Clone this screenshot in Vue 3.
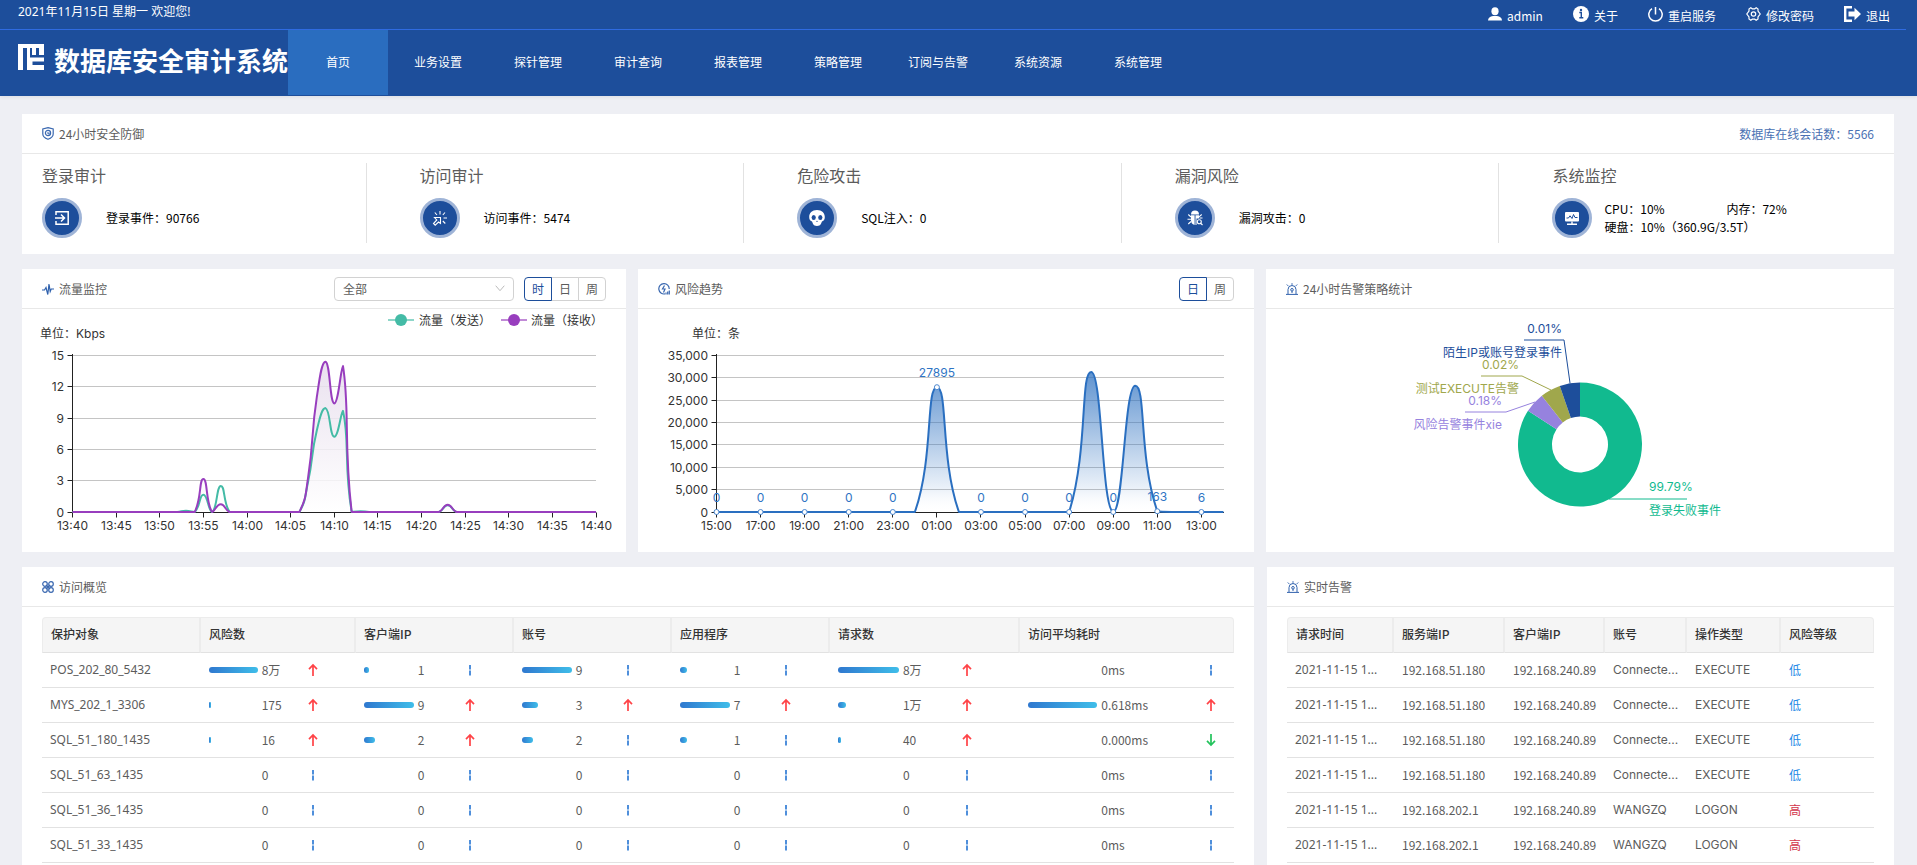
<script setup>
import { ref } from 'vue'

const tools = [
  { icon: 'user', label: 'admin' },
  { icon: 'info', label: '关于' },
  { icon: 'power', label: '重启服务' },
  { icon: 'gear', label: '修改密码' },
  { icon: 'exit', label: '退出' },
]
const menu = ['首页', '业务设置', '探针管理', '审计查询', '报表管理', '策略管理', '订阅与告警', '系统资源', '系统管理']
const stats = [
  { icon: 'login', title: '登录审计', text: '登录事件：90766' },
  { icon: 'click', title: '访问审计', text: '访问事件：5474' },
  { icon: 'skull', title: '危险攻击', text: 'SQL注入：0' },
  { icon: 'bug', title: '漏洞风险', text: '漏洞攻击：0' },
  { icon: 'monitor', title: '系统监控' },
]

const trafficRange = ref('时')
const riskRange = ref('日')
const target = ref('全部')

/* Smooth path through the points, control points kept inside each segment's box */
function smoothPath(pts, smooth = 0.5) {
  const clamp = (v, a, b) => Math.max(Math.min(v, Math.max(a, b)), Math.min(a, b))
  let d = `M${pts[0][0]},${pts[0][1]}`
  let c0 = pts[0]
  for (let i = 1; i < pts.length; i++) {
    const prev = pts[i - 1]
    const cur = pts[i]
    const next = pts[i + 1]
    let c1 = cur
    let n0 = cur
    if (next) {
      const lp = Math.hypot(cur[0] - prev[0], cur[1] - prev[1])
      const ln = Math.hypot(next[0] - cur[0], next[1] - cur[1])
      const r = ln / (ln + lp)
      c1 = [0, 1].map(a => clamp(cur[a] - (next[a] - prev[a]) * smooth * (1 - r), prev[a], cur[a]))
      n0 = [0, 1].map(a => clamp(cur[a] + (next[a] - prev[a]) * smooth * r, next[a], cur[a]))
    }
    d += `C${c0},${c1},${cur}`
    c0 = n0
  }
  return d
}
const series = (length, values) => Array.from({ length }, (_, i) => values[i] ?? 0)

const tX = i => 50.5 + i * 8.725
const tY = v => 203 - v * 10.44
const trafficTicks = ['13:40', '13:45', '13:50', '13:55', '14:00', '14:05', '14:10', '14:15', '14:20', '14:25', '14:30', '14:35', '14:40']
  .map((label, i) => ({ label, x: Math.floor(tX(i * 5)) + 0.5 }))
const trafficLevels = [15, 12, 9, 6, 3, 0].map(v => ({ v, y: Math.floor(tY(v)) + 0.5 }))
const sent = smoothPath(series(61, { 13: 0.12, 15: 1.65, 17: 2.5, 27: 2.9, 28: 7.8, 29: 9.95, 30: 7.2, 31: 9.7, 33: 0.08, 43: 0.65 }).map((v, i) => [tX(i), tY(v)]))
const received = smoothPath(series(61, { 15: 3.15, 17: 0.75, 27: 3.3, 28: 11, 29: 14.4, 30: 10.4, 31: 14, 43: 0.7 }).map((v, i) => [tX(i), tY(v)]))
const receivedArea = received + 'V203H50.5Z'

const rX = i => 78.5 + i * 22.04
const rY = v => 203 - v * 0.004474
const riskValues = series(24, { 10: 27895, 17: 31300, 19: 28200, 20: 163, 22: 6 })
const risk = smoothPath(riskValues.map((v, i) => [rX(i), rY(v)]))
const riskArea = risk + 'V203H78.5Z'
const riskLevels = [35000, 30000, 25000, 20000, 15000, 10000, 5000, 0]
  .map(v => ({ label: v.toLocaleString('en-US'), y: Math.floor(rY(v)) + 0.5 }))
const riskPoints = riskValues
  .map((v, i) => ({ v, i, x: rX(i), y: rY(v), label: String((15 + i) % 24).padStart(2, '0') + ':00' }))
  .filter(p => p.i % 2 === 0)

function ring(from, to) {
  const p = (deg, r) => {
    const a = (deg * Math.PI) / 180
    return `${(314 + r * Math.sin(a)).toFixed(2)},${(135.5 - r * Math.cos(a)).toFixed(2)}`
  }
  const big = to - from > 180 ? 1 : 0
  return `M${p(from, 62)}A62,62 0 ${big} 1 ${p(to, 62)}L${p(to, 28)}A28,28 0 ${big} 0 ${p(from, 28)}Z`
}
const slices = [
  { name: '登录失败事件', pct: '99.79%', color: '#11ba8f', d: ring(0, 303), line: '343,190 380,190 421,190', x: 383, y: 190, anchor: 'start' },
  { name: '风险告警事件xie', pct: '0.18%', color: '#9682de', d: ring(303, 322), line: '269,93 240,103 199,103', x: 236, y: 104, anchor: 'end' },
  { name: '测试EXECUTE告警', pct: '0.02%', color: '#a0a74c', d: ring(322, 341), line: '285,81 256,67 215,67', x: 253, y: 68, anchor: 'end' },
  { name: '陌生IP或账号登录事件', pct: '0.01%', color: '#1d4e9b', d: ring(341, 360), line: '304,74 298,31 258,31', x: 296, y: 32, anchor: 'end' },
]

const overviewHead = ['保护对象', '风险数', '客户端IP', '账号', '应用程序', '请求数', '访问平均耗时']
const idle = [['0', 0, '-'], ['0', 0, '-'], ['0', 0, '-'], ['0', 0, '-'], ['0', 0, '-'], ['0ms', 0, '-']]
const overview = [
  { name: 'POS_202_80_5432', cells: [['8万', 100, 'up'], ['1', 11, '-'], ['9', 100, '-'], ['1', 14, '-'], ['8万', 100, 'up'], ['0ms', 0, '-']] },
  { name: 'MYS_202_1_3306', cells: [['175', 4, 'up'], ['9', 100, 'up'], ['3', 33, 'up'], ['7', 100, 'up'], ['1万', 13, 'up'], ['0.618ms', 100, 'up']] },
  { name: 'SQL_51_180_1435', cells: [['16', 4, 'up'], ['2', 22, 'up'], ['2', 22, '-'], ['1', 14, '-'], ['40', 5, 'up'], ['0.000ms', 0, 'down']] },
  { name: 'SQL_51_63_1435', cells: idle },
  { name: 'SQL_51_36_1435', cells: idle },
  { name: 'SQL_51_33_1435', cells: idle },
]

const alertHead = ['请求时间', '服务端IP', '客户端IP', '账号', '操作类型', '风险等级']
const low = ['2021-11-15 1...', '192.168.51.180', '192.168.240.89', 'Connecte...', 'EXECUTE', '低']
const high = ['2021-11-15 1...', '192.168.202.1', '192.168.240.89', 'WANGZQ', 'LOGON', '高']
const alerts = [low, low, low, low, high, high]
</script>

<template>
  <div class="page">
    <header class="header">
      <div class="topbar">
        <span class="date">2021年11月15日 星期一 欢迎您!</span>
        <div class="tools">
          <a v-for="t in tools" :key="t.icon" href="#" class="tool">
            <svg v-if="t.icon === 'user'" width="14" height="14" viewBox="0 0 14 14" fill="currentColor">
              <ellipse cx="7" cy="4.2" rx="3.6" ry="4" /><path d="M0 13.4c0-2.6 2-3.800 5-4.400h4c3 .6 5 1.800 5 4.400z" />
            </svg>
            <svg v-else-if="t.icon === 'info'" width="16" height="16" viewBox="0 0 16 16">
              <circle cx="8" cy="8" r="8" fill="currentColor" />
              <path d="M6.300 6.500h2v5M6.300 11.800h4" stroke="#1d4e9b" stroke-width="1.400" fill="none" /><circle cx="8" cy="4" r="1.200" fill="#1d4e9b" />
            </svg>
            <svg v-else-if="t.icon === 'power'" width="15" height="15" viewBox="0 0 15 15" fill="none" stroke="currentColor" stroke-width="1.500">
              <path d="M7.500 0v7.500M4 1.600a6.700 6.700 0 1 0 7 0" />
            </svg>
            <svg v-else-if="t.icon === 'gear'" width="15" height="14" viewBox="0 0 15 14" fill="none" stroke="currentColor" stroke-width="1.200">
              <path d="M4.800.8 6.300 1.800h2.400L10.200.8 12 2v2l2.200 3L12 10v2l-1.800 1.200-1.500-1H6.300l-1.500 1L3 12v-2L.8 7 3 4V2z" /><circle cx="7.500" cy="7" r="2.200" />
            </svg>
            <svg v-else width="17" height="16" viewBox="0 0 17 16">
              <path d="M8 1.200H1.200v13.600H8" stroke="currentColor" stroke-width="2.400" fill="none" /><path d="M4.500 5.500h6V1.800L17 8l-6.500 6.200v-3.700h-6z" fill="currentColor" />
            </svg>
            <span>{{ t.label }}</span>
          </a>
        </div>
      </div>
      <div class="bar">
        <div class="brand">
          <svg width="26" height="26" viewBox="0 0 26 26">
            <path fill="#fff" d="M0 0h26v26H0z" />
            <path fill="#1d4e9b" d="M5 4h4v22H5zM12 4h2v7h4V4h3v7h5v2.500H12zM14.500 17.500H26V21H14.500z" />
          </svg>
          <h1>数据库安全审计系统</h1>
        </div>
        <nav>
          <a v-for="(m, i) in menu" :key="m" href="#" :class="{ active: i === 0 }">{{ m }}</a>
        </nav>
      </div>
    </header>

    <main>
      <section class="card">
        <div class="head">
          <svg width="12" height="13" viewBox="0 0 12 13" fill="none" stroke="#3a68b0" stroke-width="1.200">
            <path d="M6 .7 11.200 2v5c0 2.800-2.600 4.300-5.200 5.300C3.400 11.300.8 9.800.8 7V2z" /><circle cx="6" cy="6" r="2.600" /><path d="M5 6h2v1.500" />
          </svg>
          <h2>24小时安全防御</h2>
          <span class="online">数据库在线会话数：5566</span>
        </div>
        <div class="stats">
          <div v-for="s in stats" :key="s.title" class="stat">
            <h3>{{ s.title }}</h3>
            <div class="stat-row" :class="{ dense: !s.text }">
              <span class="disc">
                <svg v-if="s.icon === 'login'" width="16" height="16" viewBox="0 0 16 16" fill="none" stroke="#fff" stroke-width="1.500">
                  <path d="M2 5V1.800h12.200v12.400H2V11M1 8h9M7 4.500 10.500 8 7 11.500" />
                </svg>
                <svg v-else-if="s.icon === 'click'" width="16" height="16" viewBox="0 0 16 16" fill="none" stroke="#fff" stroke-width="1.100">
                  <path d="M2.500 7.500h6v6L6.500 12 3.200 15.200 1.500 13.500 4.800 10zM8 1v3.500M2.800 2.500 5 5M13 2.500 10.800 5M11.500 8H15M10.800 11l2.500 2.500" />
                </svg>
                <svg v-else-if="s.icon === 'skull'" width="16" height="16" viewBox="0 0 16 16">
                  <path fill="#fff" d="M8 0c5 0 7.800 3 7.800 7 0 2.200-.6 3.600-2.800 4.500-.8 1.500-1 4.500-5 4.500s-4.200-3-5-4.500C.8 10.600.2 9.200.2 7 .2 3 3 0 8 0z" />
                  <ellipse cx="4.700" cy="7.500" rx="2.100" ry="2.500" fill="#1d4e9b" /><ellipse cx="11.300" cy="7.500" rx="2.100" ry="2.500" fill="#1d4e9b" /><path d="m8 10.500.8 1.500H7.200z" fill="#1d4e9b" />
                </svg>
                <svg v-else-if="s.icon === 'bug'" width="16" height="16" viewBox="0 0 16 16">
                  <path fill="#fff" d="M4 4.500a4 4 0 0 1 8 0zM4 5.300h3.600V15C5 14.500 4 12.500 4 10zM8.500 5.300H12v3.200H9.500V15h-1z" />
                  <path fill="none" stroke="#fff" stroke-width="1.100" d="M4 7 1.300 4.500M4 9.300H.5M4 11.500 1.300 14M12 6.800l2.700-2.300M12.500 8h3M14 13.500l1.500 1.500" /><circle cx="12.300" cy="11.800" r="2" fill="none" stroke="#fff" stroke-width="1.100" />
                </svg>
                <svg v-else width="16" height="16" viewBox="0 0 16 16">
                  <rect x="1" y="2" width="14" height="9.500" rx="1" fill="#fff" /><path d="M8 11.500V14M3 14.300h10" stroke="#fff" stroke-width="1.400" />
                  <path d="M2.500 8h2L6 5.800 8 8.500l1.500-4L11 7.500h2.500" fill="none" stroke="#1d4e9b" />
                </svg>
              </span>
              <span v-if="s.text">{{ s.text }}</span>
              <div v-else class="usage">
                <span>CPU：10%</span><span>内存：72%</span>
                <span class="disk">硬盘：10%（360.9G/3.5T）</span>
              </div>
            </div>
          </div>
        </div>
      </section>

      <div class="charts">
        <section class="card">
          <div class="head">
            <svg width="12" height="12" viewBox="0 0 12 12" fill="none" stroke="#2f61ad" stroke-width="1.200"><path d="M0 7h2.500L4 4.500l1.800 7L7 1l1.200 7.500L9.200 6H12" /></svg>
            <h2>流量监控</h2>
            <div class="controls">
              <span class="picker">
                <select v-model="target" aria-label="监控对象"><option>全部</option></select>
                <svg width="10" height="7" viewBox="0 0 10 7" fill="none" stroke="#bbb"><path d="m.7.7 4.300 5L9.300.7" /></svg>
              </span>
              <div class="range" role="group" aria-label="时间范围">
                <button v-for="r in ['时', '日', '周']" :key="r" type="button" :class="{ on: trafficRange === r }" @click="trafficRange = r">{{ r }}</button>
              </div>
            </div>
          </div>
          <svg class="chart" viewBox="0 0 604 243" role="img" aria-label="流量监控">
            <defs>
              <linearGradient id="fadeTraffic" x1="0" y1="0" x2="0" y2="1"><stop offset="0" stop-color="#e6dcec" /><stop offset="1" stop-color="#fff" /></linearGradient>
            </defs>
            <path v-for="l in trafficLevels.slice(0, 5)" :key="l.v" :d="`M50.500 ${l.y}H574`" class="grid" />
            <path :d="receivedArea" fill="url(#fadeTraffic)" opacity=".85" />
            <path d="M50.500 45V204M50 203.500H574" class="axis" />
            <g v-for="l in trafficLevels" :key="'l' + l.v">
              <path :d="`M45.500 ${l.y}h5`" class="axis" /><text x="42" :y="l.y + 4" text-anchor="end">{{ l.v }}</text>
            </g>
            <g v-for="t in trafficTicks" :key="t.label">
              <path :d="`M${t.x} 203.500v5`" class="axis" /><text :x="t.x" y="221" text-anchor="middle">{{ t.label }}</text>
            </g>
            <path :d="sent" class="line" stroke="#44bba6" />
            <path :d="received" class="line" stroke="#983ebe" />
            <path d="M366 11h26" stroke="#44bba6" stroke-width="2" opacity=".6" /><circle cx="379" cy="11" r="6" fill="#44bba6" />
            <text x="397" y="16">流量（发送）</text>
            <path d="M479 11h26" stroke="#983ebe" stroke-width="2" opacity=".6" /><circle cx="492" cy="11" r="6" fill="#983ebe" />
            <text x="509" y="16">流量（接收）</text>
            <text x="18" y="29">单位：Kbps</text>
          </svg>
        </section>

        <section class="card">
          <div class="head">
            <svg width="12" height="12" viewBox="0 0 12 12" fill="none" stroke="#3a68b0" stroke-width="1.200">
              <path d="M7 10.900A5.200 5.200 0 1 1 11.200 6M6.500 2.500 4.500 6H7L5.500 9.500" /><path d="M8 11.500V9.500M9.700 11.500v-3M11.300 11.500V7.500" />
            </svg>
            <h2>风险趋势</h2>
            <div class="controls">
              <div class="range" role="group" aria-label="时间范围">
                <button v-for="r in ['日', '周']" :key="r" type="button" :class="{ on: riskRange === r }" @click="riskRange = r">{{ r }}</button>
              </div>
            </div>
          </div>
          <svg class="chart" viewBox="0 0 616 243" role="img" aria-label="风险趋势">
            <defs>
              <linearGradient id="fadeRisk" x1="0" y1="0" x2="0" y2="1"><stop offset="0" stop-color="#2a6fc0" stop-opacity=".75" /><stop offset=".85" stop-color="#2a6fc0" stop-opacity=".08" /><stop offset="1" stop-color="#fff" stop-opacity="0" /></linearGradient>
            </defs>
            <path v-for="l in riskLevels.slice(0, 7)" :key="l.y" :d="`M78.500 ${l.y}H586`" class="grid" />
            <path d="M78.500 45V204M78 203.500H586" class="axis" />
            <path :d="riskArea" fill="url(#fadeRisk)" />
            <g v-for="l in riskLevels" :key="l.label">
              <path :d="`M73.500 ${l.y}h5`" class="axis" /><text x="70" :y="l.y + 4" text-anchor="end">{{ l.label }}</text>
            </g>
            <g v-for="p in riskPoints" :key="p.i">
              <path :d="`M${Math.floor(p.x) + 0.5} 203.500v5`" class="axis" /><text :x="p.x" y="221" text-anchor="middle">{{ p.label }}</text>
            </g>
            <path :d="risk" class="line" stroke="#2a6fc0" />
            <g v-for="p in riskPoints" :key="'p' + p.i">
              <circle :cx="p.x" :cy="p.y" r="2.500" fill="#fff" stroke="#4a86cf" />
              <text :x="p.x" :y="p.y - 10" text-anchor="middle" class="value">{{ p.v }}</text>
            </g>
            <text x="54" y="29">单位：条</text>
          </svg>
        </section>

        <section class="card">
          <div class="head">
            <svg width="12" height="12" viewBox="0 0 12 12" fill="none" stroke="#2f61ad"><path d="M0 11.400h12M2 11V6.500a4 4 0 0 1 8 0V11M6 .2v1.600M.8 1.500l1.400 1.400M11.200 1.500 9.800 2.900M6 8v2" /><circle cx="6" cy="6.800" r="1.300" /></svg>
            <h2>24小时告警策略统计</h2>
          </div>
          <svg class="chart" viewBox="0 0 628 243" role="img" aria-label="24小时告警策略统计">
            <g v-for="s in slices" :key="s.name">
              <path :d="s.d" :fill="s.color" /><polyline :points="s.line" :stroke="s.color" fill="none" />
              <text :x="s.x" :y="s.y - 8" :text-anchor="s.anchor" :style="{ fill: s.color }">{{ s.pct }}</text>
              <text :x="s.x" :y="s.y + 16" :text-anchor="s.anchor" :style="{ fill: s.color }">{{ s.name }}</text>
            </g>
          </svg>
        </section>
      </div>

      <div class="tables">
        <section class="card">
          <div class="head">
            <svg width="12" height="12" viewBox="0 0 12 12" fill="none" stroke="#3a68b0" stroke-width="1.200"><circle cx="3" cy="3" r="2.300" /><circle cx="9" cy="3" r="2.300" /><circle cx="3" cy="9" r="2.300" /><circle cx="9" cy="9" r="2.300" /><path d="m4 4 4 4M8 4 4 8" /></svg>
            <h2>访问概览</h2>
          </div>
          <table class="overview">
            <colgroup><col class="o0"><col class="o2"><col class="o1"><col class="o1"><col class="o1"><col class="o6"><col class="o7"></colgroup>
            <thead><tr><th v-for="h in overviewHead" :key="h">{{ h }}</th></tr></thead>
            <tbody>
              <tr v-for="row in overview" :key="row.name">
                <td>{{ row.name }}</td>
                <td v-for="(c, i) in row.cells" :key="i">
                  <div class="meter" :class="{ wide: i === 5 }">
                    <span class="track"><i v-if="c[1]" :style="{ width: c[1] + '%' }"></i></span>
                    <span>{{ c[0] }}</span>
                    <svg width="14" height="14" viewBox="0 0 14 14" fill="none">
                      <path v-if="c[2] === 'up'" d="M7 13V2M3 6.200 7 2l4 4.200" stroke="#ff4347" stroke-width="1.700" />
                      <path v-else-if="c[2] === 'down'" d="M7 1v11M3 7.800 7 12l4-4.200" stroke="#23c35c" stroke-width="1.700" />
                      <path v-else d="M7 2v4.500M7 7.500v5" stroke="#4f8fdb" stroke-width="2" />
                    </svg>
                  </div>
                </td>
              </tr>
            </tbody>
          </table>
        </section>

        <section class="card">
          <div class="head">
            <svg width="12" height="12" viewBox="0 0 12 12" fill="none" stroke="#2f61ad"><path d="M0 11.400h12M2 11V6.500a4 4 0 0 1 8 0V11M6 .2v1.600M.8 1.500l1.400 1.400M11.200 1.500 9.800 2.900M6 8v2" /><circle cx="6" cy="6.800" r="1.300" /></svg>
            <h2>实时告警</h2>
          </div>
          <table class="alerts">
            <colgroup><col class="a1"><col class="a2"><col class="a3"><col class="a4"><col class="a5"><col class="a6"></colgroup>
            <thead><tr><th v-for="h in alertHead" :key="h">{{ h }}</th></tr></thead>
            <tbody>
              <tr v-for="(row, n) in alerts" :key="n">
                <td v-for="(c, i) in row" :key="i" :class="{ time: i === 0, latin: i === 3 || i === 4, low: c === '低', high: c === '高' }">{{ c }}</td>
              </tr>
            </tbody>
          </table>
        </section>
      </div>
    </main>
  </div>
</template>

<style>
body { margin: 0; background: #eeeff4; }
</style>

<style scoped>
* { box-sizing: border-box; }
.page {
  min-height: 100vh; display: flex; flex-direction: column;
  font: 12px/18px "Noto Sans CJK SC", sans-serif; color: #5c5c5c; background: #eeeff4;
}
h1, h2, h3 { margin: 0; font-weight: 400; }
a { color: inherit; text-decoration: none; }
svg { flex: none; display: block; }

.header { background: #1d4e9b; color: #fff; box-shadow: 0 1px 4px rgba(0, 21, 41, .08); }
.topbar { height: 30px; margin-right: 11px; padding: 0 16px 0 18px; border-bottom: 1px solid #2f6be0; display: flex; justify-content: space-between; }
.date { line-height: 24px; font-family: "Noto Sans", "Noto Sans CJK SC", sans-serif; }
.tools { display: flex; gap: 30px; }
.tool { display: flex; gap: 5px; align-items: center; height: 28px; }
.tool span { padding-top: 3px; }
.bar { height: 66px; display: flex; align-items: flex-start; }
.brand { display: flex; align-items: center; gap: 10px; height: 60px; padding-left: 18px; }
.brand svg { margin-bottom: 6px; }
h1 { font-size: 26px; line-height: 38px; font-weight: 700; }
nav { display: flex; }
nav a { width: 100px; height: 65px; line-height: 64px; text-align: center; }
nav a.active { background: #2a6dbf; }

main { flex: 1; display: flex; flex-direction: column; gap: 15px; padding: 18px 23px 0 22px; }
.card { background: #fff; min-width: 0; }
.head { height: 40px; border-bottom: 1px solid #e8e8e8; padding: 0 20px; display: flex; align-items: center; gap: 5px; }
.head h2 { font-size: 12px; line-height: 18px; }
.online { margin-left: auto; color: #4a71b3; }
.stats { display: grid; grid-template-columns: repeat(5, 1fr); column-gap: 53px; padding: 9px 17px 11px 20px; }
.stat { height: 80px; border-right: 1px solid #e2e2e2; color: #000; }
.stat:last-child { border: 0; }
h3 { font-size: 16px; line-height: 24px; color: #5c5c5c; }
.stat-row { display: flex; align-items: center; gap: 24px; margin-top: 11px; }
.dense { gap: 12px; }
.disc { width: 40px; height: 40px; border-radius: 50%; border: 3px solid #9fb4d7; background: #1d4e9b; display: flex; align-items: center; justify-content: center; }
.usage { display: grid; grid-template-columns: 122px auto; }
.disk { grid-column: span 2; }

.charts { display: grid; grid-template-columns: 604fr 616fr 628fr; gap: 12px; }
.controls { margin-left: auto; display: flex; gap: 10px; }
.picker { display: grid; align-items: center; }
.picker > * { grid-area: 1 / 1; }
.picker svg { justify-self: end; margin-right: 9px; pointer-events: none; }
select { appearance: none; width: 180px; height: 24px; padding: 0 8px; border: 1px solid #d2d2d2; border-radius: 4px; background: #fff; font: inherit; color: #5c5c5c; }
.range { display: flex; }
.range button { width: 28px; height: 24px; padding: 0; border: 1px solid #d2d2d2; background: #fff; font: inherit; color: #5c5c5c; cursor: pointer; }
.range button + button { margin-left: -1px; }
.range button:first-child { border-radius: 4px 0 0 4px; }
.range button:last-child { border-radius: 0 4px 4px 0; }
.range button.on { position: relative; border-color: #1d4e9b; color: #1d4e9b; }
.chart { width: 100%; height: auto; }
.chart text { font: 12px Inter, "Noto Sans CJK SC", sans-serif; fill: #333; }
.chart text.value { fill: #2f74c4; }
.grid { stroke: #c4c4c4; }
.axis { stroke: #222; fill: none; }
.line { fill: none; stroke-width: 2; stroke-linejoin: bevel; }

.tables { flex: 1; display: grid; grid-template-columns: 1232fr 627fr; gap: 13px; }
table { width: calc(100% - 40px); margin: 10px 20px 0; table-layout: fixed; border-collapse: separate; border-spacing: 0; }
th, td { height: 35px; padding: 0 8px; text-align: left; white-space: nowrap; border-bottom: 1px solid #e2e2e2; }
th { height: 36px; padding-bottom: 2px; background: #f5f5f5; color: #333; font-weight: 500; border-top: 1px solid #ececec; border-right: 2px solid #ececec; }
th:first-child { border-left: 1px solid #ececec; border-top-left-radius: 4px; }
th:last-child { border-right: 1px solid #ececec; border-top-right-radius: 4px; }
.o0 { width: 159px; } .o1 { width: 158px; } .o2 { width: 155px; } .o6 { width: 190px; } .o7 { width: 214px; }
.a1 { width: 107px; } .a2 { width: 111px; } .a3 { width: 100px; } .a4 { width: 82px; } .a5 { width: 94px; } .a6 { width: 93px; }
.overview td:first-child, .time { font-family: "Noto Sans", sans-serif; }
.latin { font-family: Inter, sans-serif; }
.meter { display: grid; grid-template-columns: 35% 35% 14px; align-items: center; }
.meter.wide { grid-template-columns: 35% 54% 14px; }
.meter > span + span { padding-left: 4px; }
.track { height: 6px; }
.track i { display: block; height: 6px; border-radius: 3px; background: linear-gradient(90deg, #2f78cf, #3fbde9); }
.low { color: #1f8ae6; }
.high { color: #d3364c; }
</style>
